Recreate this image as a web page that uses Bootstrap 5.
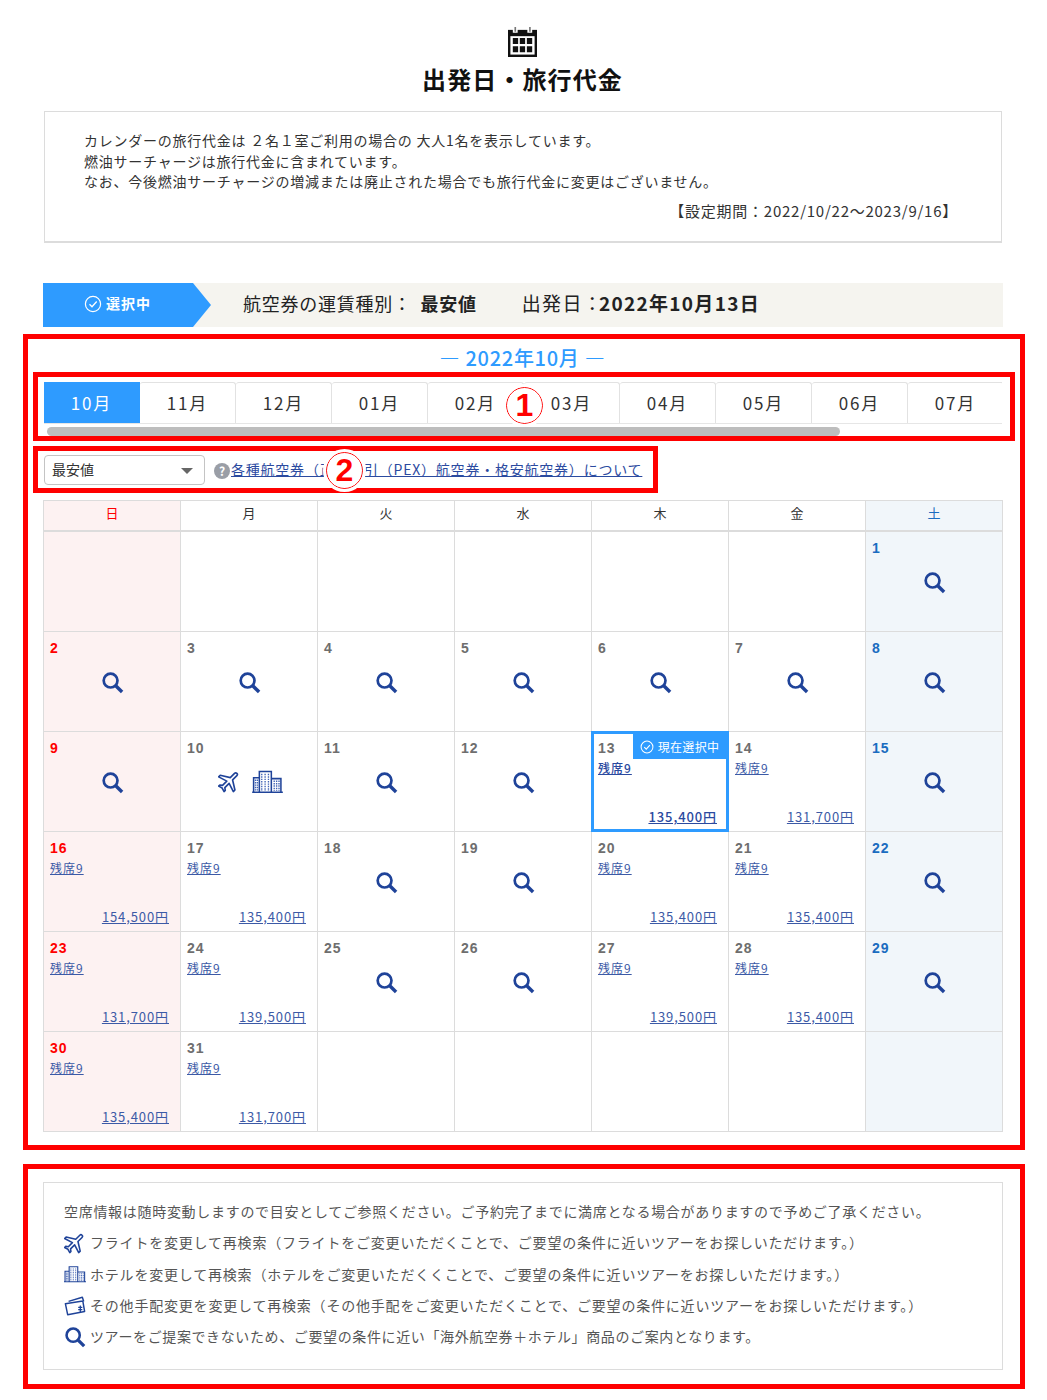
<!DOCTYPE html>
<html lang="ja">

<head>
    <meta charset="UTF-8" />
    <title>出発日・旅行代金</title>
    <meta name="viewport" content="width=device-width, initial-scale=1" />
    <link href="https://cdn.jsdelivr.net/npm/bootstrap@5.3.3/dist/css/bootstrap.min.css" rel="stylesheet" />
    <style>
        :root {
            --sel-blue: #2e9bff;
            --link-blue: #2b4a9f;
            --line: #dcdcdc;
        }

        body {
            background: #fff;
            color: #333;
            font-family: "Noto Sans CJK JP", "Liberation Sans", sans-serif;
            font-size: 14px;
        }

        a {
            color: var(--link-blue);
        }

        .page-wrap {
            width: 1047px;
            padding: 26px 22px 0 23px;
        }

        .page-head {
            padding-right: 3px;
        }

        .cal-icon {
            width: 31px;
            height: 31px;
            display: block;
            margin: 0 auto;
        }

        .page-title {
            font-size: 24px;
            font-weight: 700;
            line-height: 34px;
            letter-spacing: 1.1px;
            color: #111;
            text-align: center;
            margin: 5px 0 15px;
        }

        .info-box {
            margin: 0 23px 40px 21px;
            height: 132px;
            padding: 18px 43px 0 39px;
            border: 1px solid var(--line);
            border-bottom-width: 2px;
            line-height: 20.5px;
            letter-spacing: .76px;
            color: #333;
        }

        .info-period {
            margin-top: 9px;
            text-align: right;
            font-size: 15px;
            letter-spacing: .75px;
        }

        .status-bar {
            margin: 0 22px 7px 20px;
            height: 44px;
            background: #f5f4ef;
            font-size: 18px;
            letter-spacing: .75px;
            color: #222;
        }

        .status-flag {
            width: 168px;
            height: 44px;
            padding: 0 0 3px 41px;
            margin-right: 32px;
            background: var(--sel-blue);
            clip-path: polygon(0 0, 150px 0, 168px 50%, 150px 100%, 0 100%);
            color: #fff;
            font-size: 14px;
            font-weight: 700;
            letter-spacing: 1px;
        }

        .status-txt {
            margin-bottom: 3px;
        }

        .status-date {
            font-size: 19px;
            letter-spacing: 1.3px;
            margin-left: 45px;
        }

        .status-date b {
            margin-left: -4px;
        }

        .red-frame {
            border: 5px solid #f00;
        }

        .cal-frame {
            height: 816px;
            padding: 5px 5px 0;
        }

        .month-title {
            color: var(--sel-blue);
            font-size: 20px;
            line-height: 28px;
            font-weight: 500;
            letter-spacing: .7px;
            text-align: center;
            padding-right: 3px;
        }

        .tabs-frame {
            position: relative;
            height: 69px;
            padding: 5px 8px 0 6px;
        }

        .month-tabs {
            height: 42px;
            overflow: hidden;
            border-bottom: 1px solid #e6e6e6;
        }

        .month-tab {
            flex: 0 0 96px;
            height: 42px;
            line-height: 40px;
            text-align: center;
            font-size: 17px;
            letter-spacing: 1.8px;
            color: #333;
            border: 1px solid #e2e2e2;
            border-left: 0;
            border-bottom: 0;
            border-radius: 3px 3px 0 0;
        }

        .month-tab.is-on {
            background: var(--sel-blue);
            border-color: var(--sel-blue);
            border-radius: 0;
            color: #fff;
        }

        .fake-scroll {
            width: 793px;
            height: 9px;
            margin: 3px 0 0 3px;
            border-radius: 5px;
            background: #bdbdbd;
        }

        .fare-frame {
            position: relative;
            width: 625px;
            height: 47px;
            margin-top: 5px;
            padding: 4px 0 0 6px;
        }

        .fare-select {
            position: relative;
            flex: 0 0 161px;
            height: 30px;
            margin-right: 9px;
            border: 1px solid #c4c4c4;
            border-radius: 4px;
        }

        .fare-select select {
            width: 100%;
            height: 100%;
            padding: 0 0 2px 7px;
            border: 0;
            background: transparent;
            appearance: none;
            font-size: 14px;
            color: #333;
        }

        .fare-select::after {
            content: "";
            position: absolute;
            right: 11px;
            top: 12px;
            border-left: 6px solid transparent;
            border-right: 6px solid transparent;
            border-top: 6px solid #666;
        }

        .help-dot {
            flex: 0 0 16px;
            width: 16px;
            height: 16px;
            line-height: 16px;
            border-radius: 50%;
            background: #9a9ea6;
            color: #fff;
            font-size: 12px;
            font-weight: 700;
            text-align: center;
            margin-right: 1px;
        }

        .fare-link {
            letter-spacing: .78px;
            white-space: nowrap;
        }

        .pin-no {
            position: absolute;
            width: 37px;
            height: 37px;
            line-height: 34px;
            border: 1.5px solid #f00;
            outline: 3px solid #fff;
            border-radius: 50%;
            background: #fff;
            color: #f00;
            font-family: "Liberation Sans", sans-serif;
            font-size: 32px;
            font-weight: 700;
            text-align: center;
        }

        .pin-one {
            left: 468px;
            top: 10px;
        }

        .pin-two {
            left: 288px;
            top: 1px;
        }

        .cal-table {
            width: 960px;
            margin: 7px 0 0 10px;
            table-layout: fixed;
            --bs-table-border-color: var(--line);
            --bs-table-bg: transparent;
        }

        .cal-table th {
            height: 30px;
            padding: 0 0 5px;
            font-size: 13px;
            font-weight: 400;
            line-height: 24px;
            text-align: center;
            vertical-align: middle;
            color: #333;
            border-bottom: 2px solid var(--line);
        }

        .cal-table td {
            position: relative;
            height: 100px;
            padding: 0;
        }

        .cal-table .is-sun {
            background: #fdf2f2;
            color: #f00;
        }

        .cal-table .is-sat {
            background: #f1f6fa;
            color: #1a6cc0;
        }

        .day-box {
            height: 99px;
            padding: 8px 6px 5px;
        }

        .day-no {
            font-family: "Liberation Sans", sans-serif;
            font-size: 14px;
            font-weight: 700;
            line-height: 17px;
            letter-spacing: 1px;
            color: #6e6e6e;
        }

        .is-sun .day-no {
            color: #f00;
        }

        .is-sat .day-no {
            color: #1a6cc0;
        }

        .seats,
        .price {
            font-size: 12px;
            line-height: 18px;
        }

        .seats {
            margin-top: 2px;
            letter-spacing: 1px;
        }

        .price {
            margin: auto 5px 0 0;
            text-align: right;
            font-size: 13px;
            letter-spacing: .9px;
        }

        .price a,
        .seats a {
            color: #3c5aa6;
        }

        .is-now .price a,
        .is-now .seats a {
            color: var(--link-blue);
            font-weight: 500;
        }

        .now-border {
            position: absolute;
            inset: -1px;
            border: 3px solid var(--sel-blue);
        }

        .now-badge {
            position: absolute;
            top: 2px;
            right: 2px;
            height: 25px;
            width: 93px;
            background: var(--sel-blue);
            color: #fff;
            font-size: 12px;
            letter-spacing: .3px;
            white-space: nowrap;
        }

        .search-ico {
            width: 23px;
            height: 23px;
            margin: 14px auto 0;
            display: block;
        }

        .trip-icons {
            margin-top: 13px;
            gap: 11px;
            padding-left: 2px;
        }

        .note-frame {
            height: 225px;
            margin-top: 14px;
            padding: 13px 17px 0 15px;
        }

        .note-box {
            height: 188px;
            padding: 13px 20px 0;
            border: 1px solid var(--line);
            color: #555;
            font-size: 14px;
            letter-spacing: .7px;
        }

        .note-line {
            height: 31.3px;
            white-space: nowrap;
        }

        .note-line.has-ico {
            letter-spacing: .8px;
        }

        .note-line.has-ico:last-child {
            letter-spacing: .62px;
        }

        .note-line svg {
            flex: 0 0 22px;
            width: 22px;
            height: 22px;
            margin-right: 4px;
        }
    </style>
</head>

<body>
    <svg width="0" height="0" class="position-absolute">
        <symbol id="ico-search" viewBox="0 0 24 24">
            <circle cx="10" cy="10" r="7.2" fill="none" stroke="#1f4399" stroke-width="2.8" />
            <path d="M15.4 15.4 22 22" stroke="#1f4399" stroke-width="3.6" />
        </symbol>
        <symbol id="ico-plane" viewBox="1.5 1.5 21 21">
            <path transform="rotate(45 12 12)" fill="#fff" stroke="#1f4399" stroke-width="1.5" stroke-linejoin="round"
                d="M21 16v-2l-8-5V3.5c0-.83-.67-1.5-1.5-1.5S10 2.67 10 3.5V9l-8 5v2l8-2.5V19l-2 1.500V22l3.500-1 3.500 1v-1.500L13 19v-5.500l8 2.500z" />
        </symbol>
        <symbol id="ico-hotel" viewBox="0 0 32 24">
            <path fill="none" stroke="#1f4399" stroke-width="1.6" d="M1.500 22.500V8h6v14.500M7.500 22.500V1.500h12.500v21M20 22.500V9h10v13.500M0 23.200h32" />
            <path fill="none" stroke="#3f62b4" stroke-width="1.400" stroke-dasharray="1.500 1"
                d="M3.500 10v12M5.500 10v12M10 4v18M13.500 4v18M17 4v18M23 11v11M25.500 11v11M28 11v11" />
        </symbol>
        <symbol id="ico-ticket" viewBox="0 0 24 24">
            <path fill="none" stroke="#1f4399" stroke-width="1.600" stroke-linejoin="round" d="M5 7 20 2.500 21.500 7M1.500 9.500 20.500 6.500 22.500 18 4 21.500z" />
            <path fill="none" stroke="#1f4399" stroke-width="1.400" d="M15.500 13.500h4.500M15.500 16h4.500M17.800 11.500v7" />
        </symbol>
    </svg>

    <div class="page-wrap">
        <div class="page-head">
            <svg class="cal-icon" viewBox="0 0 32 32">
                <path fill="#111" d="M1 4h30v28H1z" />
                <path fill="#fff" d="M3.500 10.500h25v19h-25z" />
                <path fill="#111" d="M6 12.500h5.500v6H6zM13.200 12.500h5.500v6h-5.500zM20.500 12.500H26v6h-5.500zM6 21h5.500v6H6zM13.200 21h5.500v6h-5.500zM20.500 21H26v6h-5.500z" />
                <path fill="#fff" d="M6 3h5v4H6zM21 3h5v4h-5z" />
                <path fill="#777" d="M7.700 1h1.700v5H7.700zM22.800 1h1.700v5h-1.700z" />
            </svg>
            <h1 class="page-title">出発日・旅行代金</h1>
        </div>

        <div class="info-box">
            カレンダーの旅行代金は ２名１室ご利用の場合の 大人1名を表示しています。<br />
            燃油サーチャージは旅行代金に含まれています。<br />
            なお、今後燃油サーチャージの増減または廃止された場合でも旅行代金に変更はございません。
            <div class="info-period">【設定期間：2022/10/22～2023/9/16】</div>
        </div>

        <div class="status-bar d-flex align-items-center">
            <div class="status-flag d-flex align-items-center gap-1">
                <svg width="18" height="18" viewBox="0 0 18 18">
                    <circle cx="9" cy="9" r="7.600" fill="none" stroke="#fff" stroke-width="1.200" />
                    <path d="M5.500 9.200 8 11.700 12.700 6.500" fill="none" stroke="#fff" stroke-width="1.300" />
                </svg>
                選択中
            </div>
            <span class="status-txt">航空券の運賃種別： <b class="ms-1">最安値</b></span>
            <span class="status-txt status-date">出発日：<b>2022年10月13日</b></span>
        </div>

        <div class="red-frame cal-frame">
            <div class="month-title">― 2022年10月 ―</div>

            <div class="red-frame tabs-frame">
                <div class="month-tabs d-flex" id="monthTabs"></div>
                <div class="fake-scroll"></div>
                <div class="pin-no pin-one">1</div>
            </div>

            <div class="red-frame fare-frame d-flex align-items-start">
                <div class="fare-select">
                    <select aria-label="運賃種別">
                        <option>最安値</option>
                    </select>
                </div>
                <span class="help-dot mt-2">?</span>
                <a class="fare-link mt-1" href="#">各種航空券（正規割引（PEX）航空券・格安航空券）について</a>
                <div class="pin-no pin-two">2</div>
            </div>

            <table class="table table-bordered cal-table">
                <thead>
                    <tr>
                        <th class="is-sun">日</th>
                        <th>月</th>
                        <th>火</th>
                        <th>水</th>
                        <th>木</th>
                        <th>金</th>
                        <th class="is-sat">土</th>
                    </tr>
                </thead>
                <tbody id="calBody"></tbody>
            </table>
        </div>

        <div class="red-frame note-frame">
            <div class="note-box">
                <div class="note-line d-flex align-items-center">空席情報は随時変動しますので目安としてご参照ください。ご予約完了までに満席となる場合がありますので予めご了承ください。</div>
                <div class="note-line has-ico d-flex align-items-center"><svg><use href="#ico-plane" /></svg>フライトを変更して再検索（フライトをご変更いただくことで、ご要望の条件に近いツアーをお探しいただけます。）</div>
                <div class="note-line has-ico d-flex align-items-center"><svg><use href="#ico-hotel" /></svg>ホテルを変更して再検索（ホテルをご変更いただくくことで、ご要望の条件に近いツアーをお探しいただけます。）</div>
                <div class="note-line has-ico d-flex align-items-center"><svg><use href="#ico-ticket" /></svg>その他手配変更を変更して再検索（その他手配をご変更いただくことで、ご要望の条件に近いツアーをお探しいただけます。）</div>
                <div class="note-line has-ico d-flex align-items-center"><svg><use href="#ico-search" /></svg>ツアーをご提案できないため、ご要望の条件に近い「海外航空券＋ホテル」商品のご案内となります。</div>
            </div>
        </div>
    </div>

    <script>
        // Month tabs
        const months = ['10月', '11月', '12月', '01月', '02月', '03月', '04月', '05月', '06月', '07月'];
        document.getElementById('monthTabs').innerHTML = months
            .map((m, i) => `<div class="month-tab ${i === 0 ? 'is-on' : ''}">${m}</div>`)
            .join('');

        // Day data: s = search icon, t = plane + hotel, number = price
        const days = {
            1: 's', 2: 's', 3: 's', 4: 's', 5: 's', 6: 's', 7: 's', 8: 's', 9: 's', 10: 't',
            11: 's', 12: 's', 13: '135,400', 14: '131,700', 15: 's', 16: '154,500', 17: '135,400',
            18: 's', 19: 's', 20: '135,400', 21: '135,400', 22: 's', 23: '131,700', 24: '139,500',
            25: 's', 26: 's', 27: '139,500', 28: '135,400', 29: 's', 30: '135,400', 31: '131,700'
        };

        const dayBody = (d) => {
            const v = days[d];
            if (v === 's') return '<svg class="search-ico"><use href="#ico-search" /></svg>';
            if (v === 't') {
                return `<div class="trip-icons d-flex justify-content-center align-items-center">
                    <svg width="23" height="23"><use href="#ico-plane" /></svg>
                    <svg width="31" height="23"><use href="#ico-hotel" /></svg></div>`;
            }
            return `<div class="seats"><a href="#">残席9</a></div><div class="price"><a href="#">${v}円</a></div>`;
        };

        // Calendar, Oct 2022 starts on a Saturday
        let html = '';
        for (let w = 0; w < 6; w++) {
            html += '<tr>';
            for (let c = 0; c < 7; c++) {
                const d = w * 7 + c - 5;
                const cls = [c === 0 ? 'is-sun' : '', c === 6 ? 'is-sat' : '', d === 13 ? 'is-now' : ''].join(' ');
                html += `<td class="${cls}">`;
                if (d >= 1 && d <= 31) {
                    html += `<div class="day-box d-flex flex-column"><div class="day-no">${d}</div>${dayBody(d)}</div>`;
                }
                if (d === 13) {
                    html += `<div class="now-border"></div><div class="now-badge d-flex align-items-center justify-content-center gap-1">
                        <svg width="14" height="14" viewBox="0 0 18 18"><circle cx="9" cy="9" r="7.600" fill="none" stroke="#fff" stroke-width="1.300" /><path d="M5.500 9.200 8 11.700 12.700 6.500" fill="none" stroke="#fff" stroke-width="1.400" /></svg>現在選択中</div>`;
                }
                html += '</td>';
            }
            html += '</tr>';
        }
        document.getElementById('calBody').innerHTML = html;
    </script>
    <script src="https://cdn.jsdelivr.net/npm/bootstrap@5.3.3/dist/js/bootstrap.bundle.min.js"></script>
</body>

</html>
